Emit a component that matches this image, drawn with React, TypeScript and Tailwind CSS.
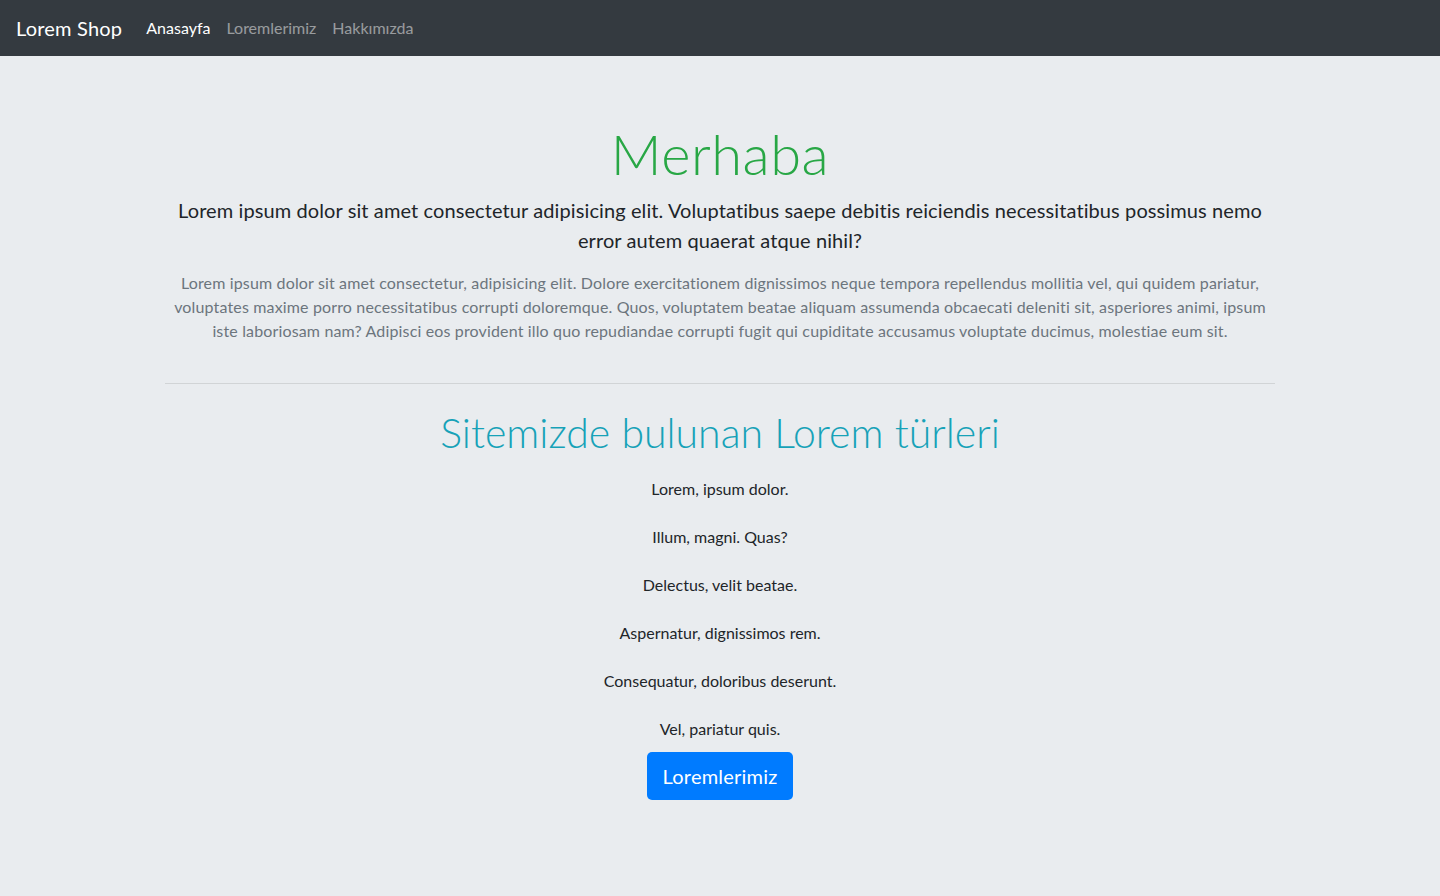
const items = [
  "Lorem, ipsum dolor.",
  "Illum, magni. Quas?",
  "Delectus, velit beatae.",
  "Aspernatur, dignissimos rem.",
  "Consequatur, doloribus deserunt.",
  "Vel, pariatur quis.",
];

const App = () => {
  return (
    <div className="min-h-[896px] bg-[#e9ecef] font-['Lato','Open_Sans',sans-serif] text-[#212529]">
      {/* navbar */}
      <nav className="flex items-center bg-[#343a40] px-4 py-2">
        <a className="mr-4 py-[5px] text-[20px] leading-[30px] tracking-[0.2px] text-white">Lorem Shop</a>
        <div className="flex">
          <a className="px-2 py-2 text-base leading-6 text-white">Anasayfa</a>
          <a className="px-2 py-2 text-base leading-6 text-white/50">Loremlerimiz</a>
          <a className="px-2 py-2 text-base leading-6 text-white/50">Hakkımızda</a>
        </div>
      </nav>

      {/* jumbotron */}
      <div className="mx-auto w-[1140px] px-[15px] pt-16 text-center">
        <h1 className="mb-2 text-[56px] font-light leading-[1.2] tracking-[0.5px] text-[#28a745]">Merhaba</h1>
        <p className="mb-4 text-[20px] leading-[30px] tracking-[0.1px]">
          Lorem ipsum dolor sit amet consectetur adipisicing elit. Voluptatibus saepe debitis reiciendis
          necessitatibus possimus nemo error autem quaerat atque nihil?
        </p>
        <p className="text-base leading-6 tracking-[0.15px] text-[#6c757d]">
          Lorem ipsum dolor sit amet consectetur, adipisicing elit. Dolore exercitationem dignissimos neque
          tempora repellendus mollitia vel, qui quidem pariatur, voluptates maxime porro necessitatibus
          corrupti doloremque. Quos, voluptatem beatae aliquam assumenda obcaecati deleniti sit, asperiores
          animi, ipsum iste laboriosam nam? Adipisci eos provident illo quo repudiandae corrupti fugit qui
          cupiditate accusamus voluptate ducimus, molestiae eum sit.
        </p>
        <hr className="mt-10 mb-6 border-t border-black/10" />
        <h2 className="mb-5 text-[41px] font-light leading-[1.2] text-[#17a2b8]">
          Sitemizde bulunan Lorem türleri
        </h2>
        {items.map((t, i) => (
          <p key={t} className={i === items.length - 1 ? "mb-[11px] text-base leading-6" : "mb-6 text-base leading-6"}>
            {t}
          </p>
        ))}
        <button className="rounded-[5px] bg-[#007bff] px-4 py-2 text-[20px] leading-[32px] tracking-[0.2px] text-white">
          Loremlerimiz
        </button>
      </div>
    </div>
  );
};

export default App;
